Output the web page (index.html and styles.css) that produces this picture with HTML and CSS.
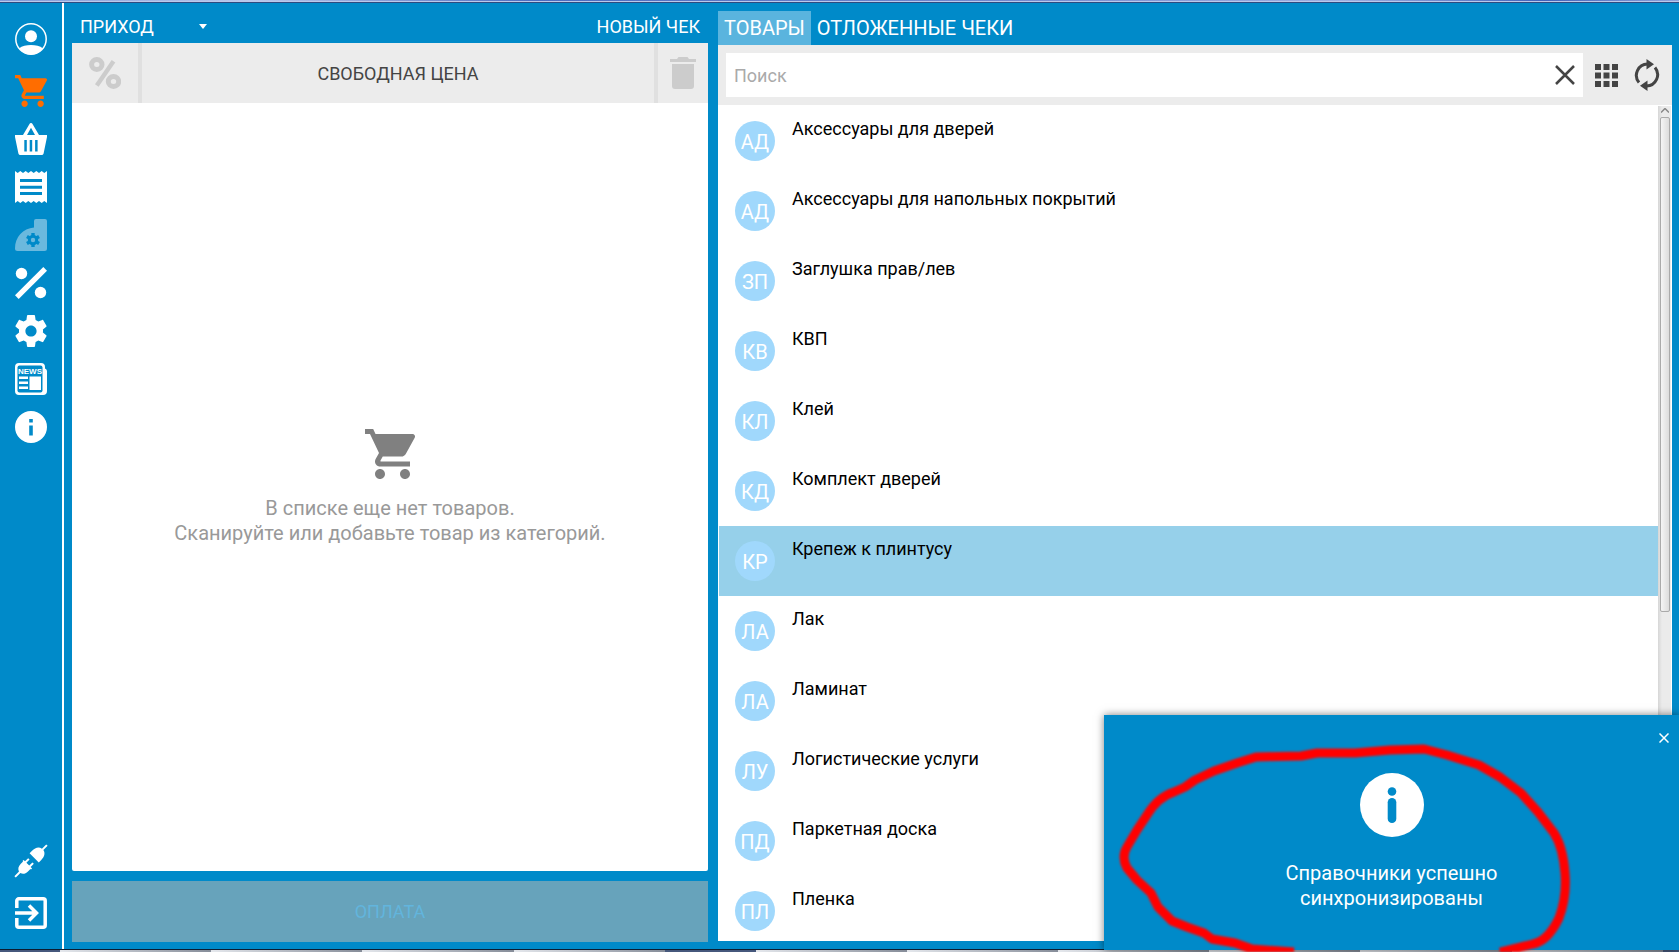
FILE: index.html
```html
<!DOCTYPE html>
<html lang="ru">
    <head>
        <meta charset="utf-8">
        <title>Новый чек</title>
        <link rel="stylesheet" href="styles.css">
    </head>
    <body>
        <div class="window-edge"></div>
        <div class="app">
            <nav class="sidebar">
                <button class="nav-btn user" aria-label="Профиль">
                    <svg viewBox="0 0 32 32"><circle cx="16" cy="16" r="15.2" fill="none" stroke="currentColor" stroke-width="1.5"/><circle cx="16" cy="13.300" r="6"/><path d="M4 25.500C7 22.800 11.500 22 16 22s9 .8 12 3.500A15.500 15.500 0 0 1 16 31.500 15.500 15.500 0 0 1 4 25.500z"/></svg>
                </button>
                <button class="nav-btn active" aria-label="Касса">
                    <svg viewBox="1 2 20 20"><path d="M7 18c-1.100 0-1.990.9-1.990 2S5.900 22 7 22s2-.9 2-2-.9-2-2-2zM1 2v2h2l3.600 7.590-1.350 2.450c-.16.28-.25.61-.25.96 0 1.100.9 2 2 2h12v-2H7.420c-.14 0-.25-.11-.25-.25l.03-.12.900-1.630h7.450c.75 0 1.410-.41 1.750-1.030l3.580-6.490A1 1 0 0 0 20 4H5.210l-.94-2H1zm16 16c-1.100 0-1.990.9-1.990 2s.89 2 1.990 2 2-.9 2-2-.9-2-2-2z"/></svg>
                </button>
                <button class="nav-btn" aria-label="Корзина">
                    <svg viewBox="0 0 32 32"><path fill-rule="evenodd" d="M16 0c.8 0 1.200.4 1.500.9L24 12h8v2l-3.300 16c-.3 1.400-1 2-2.200 2h-21c-1.200 0-1.900-.6-2.200-2L0 14v-2h8L14.500.9C14.800.4 15.200 0 16 0zm0 4.800L12 12h8zM9.300 17v11.500h2.500V17zm5.400 0v11.500h2.500V17zm5.400 0v11.500h2.500V17z"/></svg>
                </button>
                <button class="nav-btn" aria-label="Чеки">
                    <svg viewBox="0 0 32 32"><path fill-rule="evenodd" d="M0 0l2.700 2L5.300 0 8 2l2.700-2 2.600 2L16 0l2.700 2 2.600-2L24 2l2.700-2 2.600 2L32 0v32l-2.700-2-2.600 2-2.700-2-2.700 2-2.600-2-2.700 2-2.700-2-2.600 2L8 30l-2.700 2-2.600-2L0 32zM5 8v3h22V8zm0 6.700v3h22v-3zM5 21v3h22v-3z"/></svg>
                </button>
                <button class="nav-btn" aria-label="Обслуживание" disabled>
                    <svg viewBox="0 0 32 32"><path d="M19 2a2 2 0 0 1 2-2h9a2 2 0 0 1 2 2v27.500a2.500 2.500 0 0 1-2.500 2.500h-27A2.500 2.500 0 0 1 0 29.500C0 18 8 9.500 19 8.500z"/><g fill="#008ac9"><circle cx="18" cy="21" r="5.200"/><path d="M16.300 14h3.400v14h-3.400z"/><path d="M16.300 14h3.400v14h-3.400z" transform="rotate(60 18 21)"/><path d="M16.300 14h3.400v14h-3.400z" transform="rotate(120 18 21)"/></g><circle cx="18" cy="21" r="2.200"/></svg>
                </button>
                <button class="nav-btn" aria-label="Скидки">
                    <svg viewBox="0 0 32 32"><circle cx="6.500" cy="6.500" r="5.700"/><circle cx="25.500" cy="25.500" r="5.700"/><path d="M28.300 0L32 3.700 3.700 32 0 28.300z"/></svg>
                </button>
                <button class="nav-btn" aria-label="Настройки">
                    <svg viewBox="2.200 2 19.600 20"><path d="M19.430 12.980c.04-.32.070-.64.070-.98s-.03-.66-.07-.98l2.110-1.650c.19-.15.240-.42.120-.64l-2-3.460c-.12-.22-.39-.3-.61-.22l-2.490 1c-.52-.4-1.080-.73-1.690-.98l-.38-2.650A.488.488 0 0 0 14 2h-4c-.25 0-.46.18-.49.42l-.38 2.650c-.61.250-1.170.590-1.690.98l-2.490-1c-.23-.09-.49 0-.61.220l-2 3.460c-.13.220-.07.490.12.640l2.110 1.650c-.04.320-.07.650-.07.980s.03.660.070.980l-2.110 1.650c-.19.150-.24.420-.12.640l2 3.460c.12.220.390.300.610.220l2.490-1c.52.400 1.080.730 1.690.980l.38 2.650c.03.240.240.420.490.420h4c.25 0 .46-.18.490-.42l.38-2.650c.61-.25 1.170-.59 1.690-.98l2.490 1c.23.090.490 0 .61-.22l2-3.460c.12-.22.070-.49-.12-.64l-2.110-1.650zM12 15.500c-1.930 0-3.500-1.570-3.500-3.500s1.570-3.500 3.500-3.500 3.500 1.570 3.500 3.500-1.570 3.500-3.500 3.500z"/></svg>
                </button>
                <button class="nav-btn" aria-label="Новости">
                    <svg viewBox="0 0 32 32"><path d="M4 0h22a4 4 0 0 1 4 4v1.500a3 3 0 0 1 2 3V28a4 4 0 0 1-4 4H4a4 4 0 0 1-4-4V4a4 4 0 0 1 4-4z"/><rect x="2.500" y="2.500" width="25" height="27" rx="2" fill="#008ac9"/><text x="15" y="10.800" text-anchor="middle" class="news-text">NEWS</text><path d="M4 13.500h9V16H4zm0 5h9V21H4zm0 5h9V26H4zM14.500 13.500H26V27H14.500z"/></svg>
                </button>
                <button class="nav-btn" aria-label="Информация">
                    <svg viewBox="0 0 32 32"><path fill-rule="evenodd" d="M16 0a16 16 0 1 1 0 32 16 16 0 0 1 0-32zm-1.800 8v3.400h3.600V8zm0 6.500v10h3.600v-10z"/></svg>
                </button>
                <button class="nav-btn plug" aria-label="Подключение">
                    <svg viewBox="0 0 32 32"><g transform="rotate(45 16 16)"><path d="M15-6.500h2v6c4 .8 5.500 4.500 5.500 8.500v3.500h-13V8c0-4 1.500-7.700 5.500-8.500z"/><path d="M12 16h2v4.500h4V16h2v4.500h2V22h-.8v3.500c0 3.500-1.700 5.600-4.200 6.500v6.500h-2V32c-2.500-.9-4.200-3-4.200-6.500V22H10v-1.500h2z"/></g></svg>
                </button>
                <button class="nav-btn" aria-label="Выход">
                    <svg viewBox="0 0 32 32" fill="none" stroke="currentColor"><path d="M1.800 11V3.800a2 2 0 0 1 2-2h24.400a2 2 0 0 1 2 2v24.400a2 2 0 0 1-2 2H3.800a2 2 0 0 1-2-2V21" stroke-width="3.500"/><path d="M0 16h22M14 8.500l7.500 7.500-7.500 7.500" stroke-width="3.500"/></svg>
                </button>
            </nav>

            <main class="workspace">
                <section class="receipt">
                    <header class="receipt-header">
                        <div class="type-select">
                            <select id="receiptType" aria-label="Тип чека">
                                <option>ПРИХОД</option>
                            </select>
                            <svg viewBox="0 0 8 5"><path d="M0 0h8L4 5z"/></svg>
                        </div>
                        <span>НОВЫЙ ЧЕК</span>
                    </header>
                    <div class="toolbar">
                        <button class="tool-btn" aria-label="Скидка" disabled>
                            <svg viewBox="0 0 32 32" fill="none" stroke="currentColor"><ellipse cx="7.800" cy="7.500" rx="5.200" ry="5" stroke-width="5"/><ellipse cx="24.500" cy="24.500" rx="5.200" ry="5" stroke-width="5"/><path d="M24.500 4.200L7.800 28.500" stroke-width="4.400"/></svg>
                        </button>
                        <button class="free-price">СВОБОДНАЯ ЦЕНА</button>
                        <button class="tool-btn trash" aria-label="Удалить" disabled>
                            <svg viewBox="0 0 26 32"><path d="M2 7h22v22a3 3 0 0 1-3 3H5a3 3 0 0 1-3-3zM0 2h7l1.500-2h9L19 2h7v3H0z"/></svg>
                        </button>
                    </div>
                    <div class="receipt-body">
                        <svg class="empty-cart" viewBox="1 2 20 20"><path d="M7 18c-1.100 0-1.990.9-1.990 2S5.900 22 7 22s2-.9 2-2-.9-2-2-2zM1 2v2h2l3.600 7.590-1.350 2.450c-.16.28-.25.61-.25.96 0 1.100.9 2 2 2h12v-2H7.420c-.14 0-.25-.11-.25-.25l.03-.12.900-1.630h7.450c.75 0 1.410-.41 1.750-1.030l3.580-6.490A1 1 0 0 0 20 4H5.210l-.94-2H1zm16 16c-1.100 0-1.990.9-1.990 2s.89 2 1.990 2 2-.9 2-2-.9-2-2-2z"/></svg>
                        <p>В списке еще нет товаров.<br>Сканируйте или добавьте товар из категорий.</p>
                    </div>
                    <button class="pay-btn" disabled>ОПЛАТА</button>
                </section>

                <section class="catalog">
                    <div class="tabs">
                        <button class="tab selected">ТОВАРЫ</button>
                        <button class="tab">ОТЛОЖЕННЫЕ ЧЕКИ</button>
                    </div>
                    <div class="search-bar">
                        <div class="search-box">
                            <input type="text" id="search" placeholder="Поиск" aria-label="Поиск">
                            <button class="icon-btn" aria-label="Очистить">
                                <svg class="clear" viewBox="0 0 20 20" fill="none" stroke="currentColor" stroke-width="2.500"><path d="M1 1l18 18M19 1L1 19"/></svg>
                            </button>
                        </div>
                        <button class="icon-btn" aria-label="Плитка">
                            <svg class="tiles" viewBox="0 0 23 23"><path d="M0 0h6v6H0zM8.500 0h6v6h-6zM17 0h6v6h-6zM0 8.500h6v6H0zM8.500 8.500h6v6h-6zM17 8.500h6v6h-6zM0 17h6v6H0zM8.500 17h6v6h-6zM17 17h6v6h-6z"/></svg>
                        </button>
                        <button class="icon-btn" aria-label="Обновить">
                            <svg class="sync" viewBox="0 0 26 32"><g fill="none" stroke="currentColor" stroke-width="3"><path d="M5 23.500A11.300 11.300 0 0 1 13.500 5"/><path d="M21 8.500A11.300 11.300 0 0 1 12.500 27"/></g><path d="M12.500 0l7.500 5.200-7.500 5.300zM13.500 21.500v10.500L6 26.800z"/></svg>
                        </button>
                    </div>
                    <div class="list-wrap">
                        <ul class="category-list">
                            <li><button class="category"><span class="avatar">АД</span><span>Аксессуары для дверей</span></button></li>
                            <li><button class="category"><span class="avatar">АД</span><span>Аксессуары для напольных покрытий</span></button></li>
                            <li><button class="category"><span class="avatar">ЗП</span><span>Заглушка прав/лев</span></button></li>
                            <li><button class="category"><span class="avatar">КВ</span><span>КВП</span></button></li>
                            <li><button class="category"><span class="avatar">КЛ</span><span>Клей</span></button></li>
                            <li><button class="category"><span class="avatar">КД</span><span>Комплект дверей</span></button></li>
                            <li><button class="category current"><span class="avatar">КР</span><span>Крепеж к плинтусу</span></button></li>
                            <li><button class="category"><span class="avatar">ЛА</span><span>Лак</span></button></li>
                            <li><button class="category"><span class="avatar">ЛА</span><span>Ламинат</span></button></li>
                            <li><button class="category"><span class="avatar">ЛУ</span><span>Логистические услуги</span></button></li>
                            <li><button class="category"><span class="avatar">ПД</span><span>Паркетная доска</span></button></li>
                            <li><button class="category"><span class="avatar">ПЛ</span><span>Пленка</span></button></li>
                        </ul>
                        <div class="scrollbar">
                            <svg viewBox="0 0 8 5" fill="none" stroke="#888" stroke-width="1.500"><path d="M0 4.500l4-4 4 4"/></svg>
                            <div class="thumb"></div>
                        </div>
                    </div>
                </section>
            </main>
        </div>
        <footer class="taskbar">
            <span class="task-group"></span>
            <span class="task-group"></span>
            <span class="task-group"></span>
            <span class="task-group"></span>
            <span class="task-gap"></span>
            <span class="task-group"></span>
            <span class="task-group"></span>
            <span class="task-group"></span>
            <span class="task-group"></span>
            <span class="task-group"></span>
            <span class="task-group"></span>
        </footer>

        <aside class="toast">
            <button class="toast-close" aria-label="Закрыть">
                <svg viewBox="0 0 10 10" fill="none" stroke="currentColor" stroke-width="1.500"><path d="M.5.5l9 9M9.500.5l-9 9"/></svg>
            </button>
            <svg class="toast-icon" viewBox="0 0 64 64"><circle cx="32" cy="32" r="32" fill="#fff"/><g fill="#008ac9"><circle cx="32" cy="18.500" r="4.300"/><rect x="27.700" y="25" width="8.600" height="25" rx="4.300"/></g></svg>
            <p>Справочники успешно<br>синхронизированы</p>
            <!-- hand-drawn marker line -->
            <svg class="marker" viewBox="0 0 575 237"><path d="M190 237L148 234 131 228 108 224 100 218 83 212 68 206 54 192 47 178 33 165 23 153Q17 142 23 132L33 115 43 100Q54 82 70 77L81 72 91 65 110 56 133 48 152 42 197 41 213 38 251 38 286 35 320 34 343 40 375 50 396 62 417 78 434 97 450 118Q459 132 461 158 463 182 455 203 444 226 429 229L396 237"/></svg>
        </aside>
    </body>
</html>
```
FILE: styles.css
```css
body {
    margin: 0;
    height: 100vh;
    display: flex;
    flex-direction: column;
    overflow: hidden;
    position: relative;
    background-color: #008ac9;
    color: #fff;
    font-family: Roboto, "Liberation Sans", sans-serif;
    font-size: 18px;
}
button, input, select {
    font-family: inherit;
    font-size: inherit;
    color: inherit;
    background: none;
    border: none;
    border-radius: 0;
    padding: 0;
    margin: 0;
}
button {
    cursor: pointer;
}
svg {
    display: block;
    fill: currentColor;
}
svg[fill="none"] {
    fill: none;
}
p {
    margin: 0;
}
.window-edge {
    height: 1px;
    flex-shrink: 0;
    background: linear-gradient(90deg, #7f9ad8, #b9c8ec 15%, #4a6cc0 32%, #7189cf 60%, #9db0e2 80%, #3f62bb 92%, #8fa5dc);
    border-bottom: 1px solid #bcc9ea;
    box-shadow: 0 1px 0 #2f4a80;
    margin-bottom: 1px;
}
.app {
    flex: 1;
    min-height: 0;
    display: flex;
}

/* sidebar */
.sidebar {
    width: 62px;
    flex-shrink: 0;
    padding: 20px 0;
    display: flex;
    flex-direction: column;
    align-items: center;
    gap: 16px;
    border-right: 2px solid #fff;
}
.nav-btn svg {
    width: 32px;
    height: 32px;
}
.nav-btn.user, .nav-btn.plug {
    margin-bottom: 4px;
}
.nav-btn.active {
    color: #ff6d00;
}
.nav-btn:disabled {
    color: #6bb9de;
}
.nav-btn.plug {
    margin-top: auto;
}
.nav-btn.plug svg {
    overflow: visible;
}
.news-text {
    font-family: "Liberation Sans", sans-serif;
    font-size: 8px;
    font-weight: bold;
}

.workspace {
    flex: 1;
    display: grid;
    grid-template-columns: 2fr 3fr;
    gap: 10px;
    padding: 0 7px 0 8px;
    min-width: 0;
}

/* receipt */
.receipt {
    display: flex;
    flex-direction: column;
    padding-bottom: 7px;
}
.receipt-header {
    height: 40px;
    display: flex;
    justify-content: space-between;
    align-items: center;
    padding: 6px 8px 0;
    box-sizing: border-box;
}
.type-select {
    display: flex;
    align-items: center;
    width: 127px;
}
.type-select select {
    flex: 1;
    appearance: none;
}
.type-select svg {
    width: 8px;
    height: 5px;
}
.toolbar {
    height: 60px;
    display: flex;
    gap: 4px;
    background-color: #e0e0e0;
}
.tool-btn {
    width: 66px;
    display: flex;
    justify-content: center;
    align-items: center;
    background-color: #ececec;
    color: #ccc;
}
.tool-btn svg {
    width: 32px;
    height: 32px;
}
.tool-btn.trash {
    width: 50px;
}
.tool-btn.trash svg {
    width: 26px;
}
.free-price {
    flex: 1;
    background-color: #ececec;
    color: #444;
}
.receipt-body {
    flex: 1;
    display: flex;
    flex-direction: column;
    align-items: center;
    justify-content: center;
    gap: 17px;
    background-color: #fff;
    border-radius: 0 0 2px 2px;
    color: #999;
    font-size: 20px;
    line-height: 25px;
    text-align: center;
}
.empty-cart {
    width: 50px;
    height: 50px;
    color: #808080;
}
.pay-btn {
    height: 61px;
    margin-top: 10px;
    background-color: #67a3bb;
    color: #62b5dd;
}

/* catalog */
.catalog {
    display: flex;
    flex-direction: column;
    padding: 8px 0;
    min-height: 0;
}
.tabs {
    display: flex;
    height: 34px;
    font-size: 20px;
}
.tab {
    padding: 0 6px;
}
.tab.selected {
    background-color: #5ab4de;
}
.search-bar {
    height: 60px;
    box-sizing: border-box;
    display: flex;
    align-items: center;
    gap: 12px;
    padding: 8px 12px 8px 8px;
    background-color: #ececec;
    color: #444;
}
.search-box {
    flex: 1;
    height: 44px;
    display: flex;
    align-items: center;
    padding: 0 8px;
    background-color: #fff;
}
.search-box input {
    flex: 1;
    outline: none;
}
.search-box input::placeholder {
    color: #aaa;
}
.clear {
    width: 20px;
    height: 20px;
}
.tiles {
    width: 23px;
    height: 23px;
}
.search-bar .sync {
    width: 26px;
    height: 32px;
    margin-left: 4px;
}
.list-wrap {
    flex: 1;
    min-height: 0;
    display: flex;
    background-color: #fff;
    padding: 1px 1px 0;
}
.category-list {
    flex: 1;
    margin: 0;
    padding: 0;
    list-style: none;
    overflow: hidden;
}
.category {
    width: 100%;
    height: 70px;
    display: flex;
    align-items: flex-start;
    gap: 17px;
    padding: 15px 16px 0;
    box-sizing: border-box;
    color: #000;
    text-align: left;
    line-height: 16px;
}
.category.current {
    background-color: #96d0ea;
}
.avatar {
    width: 40px;
    height: 40px;
    border-radius: 50%;
    background-color: #a0d8fc;
    color: #fff;
    font-size: 20px;
    line-height: 42px;
    text-align: center;
}
.scrollbar {
    width: 13px;
    box-sizing: border-box;
    display: flex;
    flex-direction: column;
    align-items: center;
    background: linear-gradient(90deg, #d6d6d6, #ebebeb 4px);
}
.scrollbar svg {
    width: 8px;
    height: 5px;
    margin: 2px 0 4px;
}
.thumb {
    width: 8px;
    height: 59%;
    border: 1px solid #aaa;
    border-radius: 2px;
    background: linear-gradient(90deg, #f5f5f5, #dcdcdc);
}

.taskbar {
    height: 3px;
    flex-shrink: 0;
    box-sizing: border-box;
    display: flex;
    padding: 0 16px 0 60px;
    background-color: #46587c;
    border-top: 1px solid #0c1c30;
}
.task-group {
    flex: 5;
    background: linear-gradient(90deg, #e4e7ec, #868d99);
}
.task-gap {
    flex: 3;
}

/* notification */
.toast {
    position: absolute;
    right: 0;
    bottom: 2px;
    width: 575px;
    height: 235px;
    display: flex;
    flex-direction: column;
    align-items: center;
    box-sizing: border-box;
    padding-top: 58px;
    background-color: #008ac9;
    box-shadow: 0 0 8px rgba(0,0,0,0.5);
    font-size: 20px;
    line-height: 25px;
    text-align: center;
}
.toast-icon {
    width: 64px;
    height: 64px;
    margin-bottom: 24px;
}
.toast-close {
    position: absolute;
    top: 18px;
    right: 10px;
}
.toast-close svg {
    width: 10px;
    height: 10px;
}
.marker {
    position: absolute;
    top: 0;
    left: 0;
    width: 575px;
    height: 237px;
    fill: none;
    stroke: #f00;
    stroke-width: 9px;
    stroke-linejoin: round;
    filter: blur(1px);
    pointer-events: none;
}
```
